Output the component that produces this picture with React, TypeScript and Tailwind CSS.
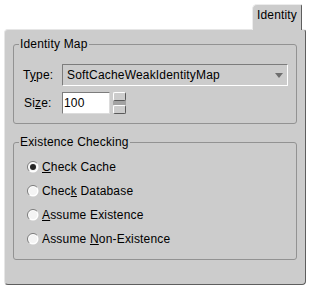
import React from "react";

function Radio({ checked }: { checked?: boolean }) {
  return (
    <svg width="12" height="12" viewBox="0 0 12 12" className="shrink-0">
      <circle cx="6" cy="6" r="5.5" fill="#ffffff" />
      <path d="M2.1 9.9 A5 5 0 0 1 9.9 2.1" fill="none" stroke="#7a7a7a" strokeWidth="1" />
      <circle cx="6" cy="6" r="4" fill="#f4f4f4" />
      {checked && <circle cx="6" cy="6" r="3" fill="#262626" />}
    </svg>
  );
}

function RadioRow({ children, checked }: { children: React.ReactNode; checked?: boolean }) {
  return (
    <div className="flex h-[24px] items-center">
      <Radio checked={checked} />
      <span className="ml-[3px]">{children}</span>
    </div>
  );
}

export default function App() {
  return (
    <div className="w-[310px] h-[289px] bg-white px-[4px] pt-[4px] font-['Liberation_Sans',Arial,sans-serif] text-[12px] leading-[14px] tracking-[0.18px] text-black">
      <div className="flex justify-end pr-[4px]">
        <div className="relative z-10 -mb-[1px] flex h-[26px] w-[50px] justify-center rounded-tl-[5px] rounded-tr-[2px] border-l border-r border-t border-l-[#ececec] border-r-[#5e5e5e] border-t-[#ececec] bg-[#cccccc] pt-[3px]">
          Identity
        </div>
      </div>
      <div className="h-[256px] rounded-[4px] rounded-tr-[3px] border border-b-[#5e5e5e] border-l-[#e6e6e6] border-r-[#5e5e5e] border-t-[#e6e6e6] bg-[#cccccc] px-[8px] pt-[7px]">
        <fieldset className="rounded-[3px] border border-[#929292] px-[5px] pb-[9px]">
          <legend className="px-[1px] leading-[14px]">Identity Map</legend>
          <div className="pt-[13px] pl-[4px]">
            <div className="flex items-center">
              <span className="w-[39px]">
                T<span className="underline">y</span>pe:
              </span>
              <div className="flex h-[22px] w-[226px] items-center justify-between rounded-[1px] border border-b-white border-l-[#7c7c7c] border-r-white border-t-[#7c7c7c] bg-[#cccccc] pl-[4px] pr-[4px]">
                <span>SoftCacheWeakIdentityMap</span>
                <svg width="8" height="5" viewBox="0 0 8 5">
                  <path d="M0 0 H8 L4 5 Z" fill="#6e6e6e" />
                </svg>
              </div>
            </div>
            <div className="mt-[6px] flex items-center">
              <span className="w-[39px] pl-[1px]">
                Si<span className="underline">z</span>e:
              </span>
              <div className="flex h-[22px] w-[48px] items-center border border-b-[#dcdcdc] border-l-[#7c7c7c] border-r-[#dcdcdc] border-t-[#7c7c7c] bg-white pl-[1px]">
                100
              </div>
              <div className="ml-[3px] flex h-[22px] w-[13px] flex-col">
                <div className="h-[9px] rounded-[2px] border border-b-[#5a5a5a] border-l-white border-r-[#5a5a5a] border-t-white bg-[#cccccc]" />
                <div className="h-[4px] bg-[#a3a3a3]" />
                <div className="h-[9px] rounded-[2px] border border-b-[#5a5a5a] border-l-white border-r-[#5a5a5a] border-t-white bg-[#cccccc]" />
              </div>
            </div>
          </div>
        </fieldset>
        <fieldset className="mt-[11px] rounded-[3px] border border-[#929292] px-[5px] pb-[8px]">
          <legend className="px-[1px] leading-[14px]">Existence Checking</legend>
          <div className="pt-[6px] pl-[8px]">
            <RadioRow checked>
              <span className="underline">C</span>heck Cache
            </RadioRow>
            <RadioRow>
              Chec<span className="underline">k</span> Database
            </RadioRow>
            <RadioRow>
              <span className="underline">A</span>ssume Existence
            </RadioRow>
            <RadioRow>
              Assume <span className="underline">N</span>on-Existence
            </RadioRow>
          </div>
        </fieldset>
      </div>
    </div>
  );
}
